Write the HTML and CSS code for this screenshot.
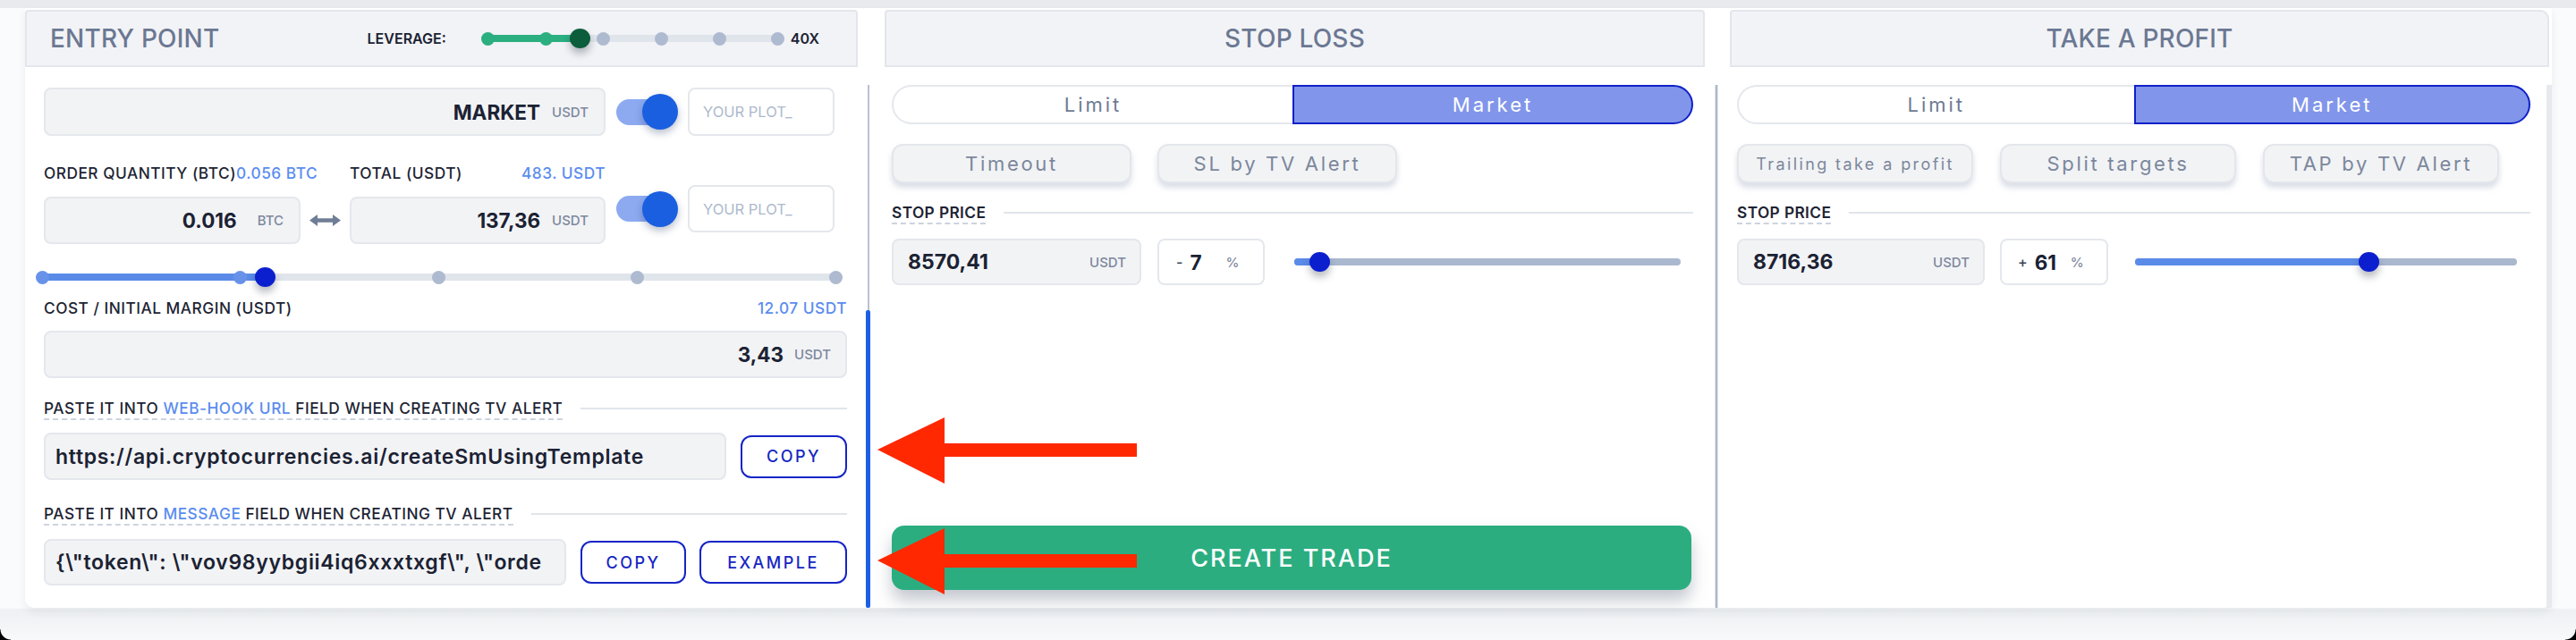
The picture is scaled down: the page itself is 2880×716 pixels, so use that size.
FILE: index.html
```html
<!DOCTYPE html>
<html lang="en">
<head>
<meta charset="utf-8">
<title>Trade</title>
<link rel="stylesheet" href="styles.css">
</head>
<body>
<div class="top-strip"></div>
<div class="card">
  <section class="col col-entry">
    <header class="col-head head-entry">
      <span class="head-title">ENTRY POINT</span>
      <span class="lev-label">LEVERAGE:</span>
      <div class="slider lev-slider">
        <div class="track"><div class="fill fill-green" style="width:103px"></div></div>
        <div class="dots"><i class="dot dot-green"></i><i class="dot dot-green"></i><i class="dot"></i><i class="dot"></i><i class="dot"></i><i class="dot"></i></div>
        <div class="knob knob-green" style="left:99px"></div>
      </div>
      <span class="lev-max">40X</span>
    </header>
    <div class="col-body entry-body">
      <div class="content entry-content">
        <div class="top-grid">
          <div class="tg-left">
            <div class="field field-market"><span class="val">MARKET</span><span class="unit">USDT</span></div>
            <div class="qty-labels">
              <div class="lbl"><span>ORDER QUANTITY (BTC)</span><span class="blue">0.056 BTC</span></div>
              <div class="lbl lbl-split"><span>TOTAL (USDT)</span><span class="blue">483. USDT</span></div>
            </div>
            <div class="qty-row">
              <div class="field field-btc"><span class="val">0.016</span><span class="unit">BTC</span></div>
              <svg class="swap" viewBox="0 0 35 13" width="35" height="13"><path d="M0 6.5 L9 0 L9 4.3 L26 4.3 L26 0 L35 6.5 L26 13 L26 8.7 L9 8.7 L9 13 Z" fill="#6f7d96"/></svg>
              <div class="field field-total"><span class="val">137,36</span><span class="unit">USDT</span></div>
            </div>
          </div>
          <div class="tg-right">
            <div class="tr-row">
              <div class="toggle"><span class="toggle-track"></span><span class="toggle-knob"></span></div>
              <div class="plot">YOUR PLOT_</div>
            </div>
            <div class="tr-row tr-row2">
              <div class="toggle"><span class="toggle-track"></span><span class="toggle-knob"></span></div>
              <div class="plot">YOUR PLOT_</div>
            </div>
          </div>
        </div>
        <div class="slider qty-slider">
          <div class="track"><div class="fill fill-blue" style="width:249px"></div></div>
          <div class="dots"><i class="dot dot-blue"></i><i class="dot dot-blue"></i><i class="dot"></i><i class="dot"></i><i class="dot"></i></div>
          <div class="knob knob-blue" style="left:245px"></div>
        </div>
        <div class="lbl cost-label"><span>COST / INITIAL MARGIN (USDT)</span><span class="blue">12.07 USDT</span></div>
        <div class="field field-cost"><span class="val">3,43</span><span class="unit">USDT</span></div>
        <div class="sec-label hook-label"><span class="lt">PASTE IT INTO <span class="blue">WEB-HOOK URL</span> FIELD WHEN CREATING TV ALERT</span><span class="line"></span></div>
        <div class="url-row">
          <div class="field field-url"><span class="code">https://api.cryptocurrencies.ai/createSmUsingTemplate</span></div>
          <div class="btn-outline btn-copy">COPY</div>
        </div>
        <div class="sec-label msg-label"><span class="lt">PASTE IT INTO <span class="blue">MESSAGE</span> FIELD WHEN CREATING TV ALERT</span><span class="line"></span></div>
        <div class="url-row msg-row">
          <div class="field field-msg"><span class="code">{\"token\": \"vov98yybgii4iq6xxxtxgf\", \"orde</span></div>
          <div class="btn-outline btn-copy2">COPY</div>
          <div class="btn-outline btn-example">EXAMPLE</div>
        </div>
      </div>
      <div class="sb"><div class="sb-thumb"></div></div>
    </div>
  </section>

  <section class="col col-stop">
    <header class="col-head head-stop"><span class="head-title">STOP LOSS</span></header>
    <div class="col-body side-body">
      <div class="content side-content stop-content">
        <div class="seg"><div class="seg-l">Limit</div><div class="seg-r">Market</div></div>
        <div class="opts stop-opts"><div class="opt">Timeout</div><div class="opt">SL by TV Alert</div></div>
        <div class="sec-label price-label"><span class="lt">STOP PRICE</span><span class="line"></span></div>
        <div class="price-row">
          <div class="field field-price stop-price"><span class="val">8570,41</span><span class="unit">USDT</span></div>
          <div class="pct stop-pct"><span class="sign">-</span><span class="pval">7</span><span class="punit">%</span></div>
          <div class="slider line-slider stop-slider">
            <div class="track track-dark"><div class="fill fill-blue" style="width:28px"></div></div>
            <div class="knob knob-blue" style="left:16.5px"></div>
          </div>
        </div>
        <div class="create">CREATE TRADE</div>
      </div>
      <div class="vline"></div>
    </div>
  </section>

  <section class="col col-take">
    <header class="col-head head-take"><span class="head-title">TAKE A PROFIT</span></header>
    <div class="col-body side-body">
      <div class="content side-content take-content">
        <div class="seg"><div class="seg-l">Limit</div><div class="seg-r">Market</div></div>
        <div class="opts take-opts"><div class="opt opt-small">Trailing take a profit</div><div class="opt">Split targets</div><div class="opt">TAP by TV Alert</div></div>
        <div class="sec-label price-label"><span class="lt">STOP PRICE</span><span class="line"></span></div>
        <div class="price-row">
          <div class="field field-price take-price"><span class="val">8716,36</span><span class="unit">USDT</span></div>
          <div class="pct take-pct"><span class="sign">+</span><span class="pval">61</span><span class="punit">%</span></div>
          <div class="slider line-slider take-slider">
            <div class="track track-dark"><div class="fill fill-blue" style="width:261px"></div></div>
            <div class="knob knob-blue" style="left:249.5px"></div>
          </div>
        </div>
      </div>
      <div class="vline vline-light"></div>
    </div>
  </section>
</div>

<svg class="red-arrow ra-1" viewBox="0 0 290 74" width="290" height="74"><polygon points="0,36 75,0 75,29 290,29 290,44 75,44 75,74" fill="#ff2800"/></svg>
<svg class="red-arrow ra-2" viewBox="0 0 290 74" width="290" height="74"><polygon points="0,36 75,0 75,29 290,29 290,44 75,44 75,74" fill="#ff2800"/></svg>
<span class="corner corner-bl"></span>
<span class="corner corner-br"></span>
</body>
</html>
```

FILE: styles.css
```css
* { box-sizing: border-box; margin: 0; padding: 0; }
html, body { width: 2880px; height: 716px; }
body {
  position: relative;
  overflow: hidden;
  background: linear-gradient(to bottom, #fafbfc 0, #fafbfc 680px, #eef0f3 682px, #f8f9fb 716px);
  font-family: Inter, "Noto Sans", "Liberation Sans", sans-serif;
  color: #1b2233;
}
.top-strip { height: 9px; background: #e8eaee; }

.card {
  display: flex;
  margin-left: 28px;
  width: 2825px;
  height: 671px;
  background: #fff;
  border-radius: 0 0 10px 10px;
  box-shadow: 0 5px 10px rgba(40, 50, 70, 0.07);
}
.col { display: flex; flex-direction: column; }
.col-entry { width: 948px; }
.col-stop { width: 945px; }
.col-take { width: 932px; }

.col-head {
  height: 64px;
  margin-top: 2px;
  background: #f2f3f6;
  border: 2px solid #e3e6eb;
  border-radius: 4px 4px 0 0;
  display: flex;
  align-items: center;
}
.head-entry { width: 931px; padding: 0 41px 0 26px; }
.head-stop { margin-left: 13px; width: 917px; justify-content: center; }
.head-take { margin-left: 13px; width: 916px; justify-content: center; border-radius: 4px 10px 0 0; }
.head-title { font-size: 28px; font-weight: 500; color: #6b7893; letter-spacing: 0.2px; }
.lev-label { margin-left: auto; margin-right: 39px; font-size: 16px; font-weight: 600; color: #1b2233; }
.lev-max { margin-left: 7px; font-size: 16px; font-weight: 600; color: #1b2233; }

/* sliders */
.slider { position: relative; height: 22px; flex: none; }
.slider .track {
  position: absolute; left: 7.5px; right: 7.5px; top: 7px; height: 8px;
  border-radius: 4px; background: #e0e4eb;
}
.slider .fill { height: 100%; border-radius: 4px; }
.fill-green { background: #2bae80; }
.fill-blue { background: #5b8be8; }
.slider .dots { position: relative; display: flex; justify-content: space-between; align-items: center; height: 100%; }
.dot { display: block; width: 15px; height: 15px; border-radius: 50%; background: #aebad0; }
.dot-green { background: #2bae80; }
.dot-blue { background: #6892ea; }
.knob {
  position: absolute; top: 0; width: 23px; height: 22px; border-radius: 50%;
  box-shadow: 0 6px 8px rgba(20, 30, 50, 0.3);
}
.knob-green { background: #0c5d3c; }
.knob-blue { background: #0c1fcf; }
.lev-slider { width: 339px; }
.qty-slider { width: 902px; margin-left: -9.5px; margin-top: 26px; }
.line-slider .track { left: 0; right: 0; }
.track-dark { background: #aab8cf !important; }
.stop-slider { width: 432px; margin-left: 33px; }
.take-slider { width: 427px; margin-left: 30px; }

/* bodies */
.col-body { flex: 1; display: flex; padding-top: 20px; }
.content { display: flex; flex-direction: column; }
.entry-body { padding-left: 21px; }
.entry-content { width: 898px; }
.side-body { padding-left: 21px; padding-bottom: 20px; }
.stop-content { width: 896px; }
.take-content { width: 887px; }

.sb {
  width: 5px; margin-left: 21px;
  background: linear-gradient(to right, transparent 1.5px, #b8c1cf 1.5px, #b8c1cf 3.5px, transparent 3.5px);
  display: flex; flex-direction: column; justify-content: flex-end;
}
.sb-thumb { height: 333px; background: #1d5fe3; border-radius: 2px; }
.vline { width: 4px; margin-left: 24px; margin-bottom: -20px; background: linear-gradient(to right, #e3e7ed 0, #e3e7ed 1px, #aeb8c8 1px, #aeb8c8 3px, #e3e7ed 3px); }
.vline-light { width: 6px; margin-left: 18px; background: #e6e9ee; }

/* fields */
.field {
  display: flex; align-items: center; justify-content: flex-end;
  background: #f2f3f5; border: 2px solid #e4e7ec; border-radius: 8px;
}
.val { font-size: 22.5px; font-weight: 700; color: #1b2233; }
.unit { font-size: 15px; font-weight: 500; color: #7c889d; }
.blue { color: #5b8def; }

.top-grid { display: flex; margin-top: 3px; }
.tg-left { width: 628px; }
.tg-right { margin-left: 12px; width: 258px; }
.field-market { height: 54px; padding-right: 17px; gap: 13px; }
.qty-labels { display: grid; grid-template-columns: 342px 286px; margin-top: 32px; height: 20px; align-items: center; }
.lbl { font-size: 17.3px; font-weight: 500; letter-spacing: 0.5px; color: #1d2433; white-space: nowrap; line-height: 20px; }
.lbl-split { display: flex; justify-content: space-between; }
.qty-row { display: grid; grid-template-columns: 287px 35px 286px; column-gap: 10px; margin-top: 16px; height: 53px; align-items: center; }
.field-btc { height: 53px; padding-right: 17px; gap: 23px; }
.field-total { height: 53px; padding-right: 17px; gap: 13px; }

.tr-row { display: flex; align-items: center; height: 54px; }
.tr-row2 { margin-top: 55px; height: 53px; }
.toggle { position: relative; width: 69px; height: 40px; flex: none; }
.toggle-track { position: absolute; left: 0; top: 5.5px; width: 58px; height: 29px; border-radius: 15px; background: #8daaf1; }
.toggle-knob { position: absolute; right: 0; top: 0; width: 40px; height: 40px; border-radius: 50%; background: #1a5fe0; box-shadow: 0 4px 8px rgba(20, 40, 90, 0.3); }
.plot {
  margin-left: 11px; width: 164px; height: 100%;
  border: 2px solid #e4e7ec; border-radius: 8px; background: #fff;
  display: flex; align-items: center; padding-left: 15px;
  font-size: 16.5px; color: #adb9cd;
}

.cost-label { display: flex; justify-content: space-between; margin-top: 14px; height: 20px; }
.field-cost { height: 53px; margin-top: 15px; padding-right: 16px; gap: 12px; }

.sec-label { display: flex; align-items: flex-start; gap: 20px; }
.sec-label .lt {
  font-size: 17.3px; font-weight: 500; letter-spacing: 0.5px; line-height: 20px; color: #1d2433;
  white-space: nowrap; padding-bottom: 1px; border-bottom: 2px dashed #cdd3dd;
}
.sec-label .line { flex: 1; height: 2px; margin-top: 9px; background: #e1e5eb; }
.hook-label { margin-top: 24px; }
.msg-label { margin-top: 28px; }
.price-label { margin-top: 23px; }
.price-label .lt { font-size: 17.3px; font-weight: 600; letter-spacing: 0.4px; }

.url-row { display: flex; align-items: center; gap: 16px; height: 53px; margin-top: 14px; }
.msg-row { margin-top: 15px; height: 52px; gap: 15px; }
.field-url, .field-msg {
  height: 100%; justify-content: flex-start; padding-left: 11px; overflow: hidden;
}
.field-url { width: 763px; }
.field-msg { width: 584px; margin-right: 1px; padding-right: 24px; }
.code { min-width: 0; font-size: 23px; letter-spacing: 0.7px; font-weight: 600; color: #1b2233; white-space: nowrap; overflow: hidden; }
.btn-outline {
  height: 48px; flex: none;
  border: 2px solid #1525c6; border-radius: 12px; background: #fff;
  display: flex; align-items: center; justify-content: center;
  font-size: 18px; font-weight: 500; letter-spacing: 2.5px; color: #1626c2;
}
.btn-copy { width: 119px; }
.btn-copy2 { width: 118px; }
.btn-example { width: 165px; }

/* side columns */
.seg { display: grid; grid-template-columns: 1fr 1fr; height: 44px; }
.seg-l, .seg-r { display: flex; align-items: center; justify-content: center; font-size: 22px; letter-spacing: 3px; }
.seg-l { border: 2px solid #e4e7ec; border-right: none; border-radius: 22px 0 0 22px; background: #fff; color: #6e7b93; }
.seg-r { border: 2px solid #1020c8; border-radius: 0 22px 22px 0; background: #8196ea; color: #fff; }

.opts { display: flex; margin-top: 22px; height: 44px; }
.stop-opts { gap: 29px; }
.stop-opts .opt { width: 268px; }
.take-opts { gap: 30px; }
.take-opts .opt { width: 264px; }
.opt {
  display: flex; align-items: center; justify-content: center;
  background: #f2f3f5; border: 2px solid #e3e6eb; border-radius: 12px;
  box-shadow: 0 5px 6px rgba(150, 160, 185, 0.35);
  font-size: 22px; letter-spacing: 2.7px; color: #7b879c; white-space: nowrap;
}
.opt-small { font-size: 18px; letter-spacing: 2.4px; }

.price-row { display: flex; align-items: center; height: 52px; margin-top: 16px; }
.field-price { height: 52px; justify-content: space-between; padding: 0 15px 0 16px; }
.field-price .val { font-size: 23px; }
.stop-price { width: 279px; }
.take-price { width: 277px; }
.pct {
  height: 52px; display: flex; align-items: center;
  border: 2px solid #e4e7ec; border-radius: 8px; background: #fff;
}
.stop-pct { width: 120px; margin-left: 18px; padding-left: 19px; }
.take-pct { width: 121px; margin-left: 17px; padding-left: 18px; }
.sign { font-size: 16px; font-weight: 500; color: #3a4356; margin-right: 8px; }
.pval { font-size: 22.5px; font-weight: 700; color: #1b2233; width: 40px; }
.punit { font-size: 15px; font-weight: 500; color: #7c889d; }

.create {
  margin-top: auto; width: 894px; height: 72px;
  border-radius: 14px; background: #2bad80;
  box-shadow: 0 12px 18px rgba(90, 100, 120, 0.35);
  display: flex; align-items: center; justify-content: center;
  font-size: 27px; font-weight: 500; letter-spacing: 2px; color: #fff;
}

/* overlays */
.red-arrow { position: absolute; left: 981px; }
.ra-1 { top: 467px; }
.ra-2 { top: 591px; }
.corner { position: absolute; bottom: 0; width: 12px; height: 12px; }
.corner-bl { left: 0; background: radial-gradient(circle at 100% 0, transparent 11px, #000 12px); }
.corner-br { right: 0; background: radial-gradient(circle at 0 0, transparent 11px, #000 12px); }
```
